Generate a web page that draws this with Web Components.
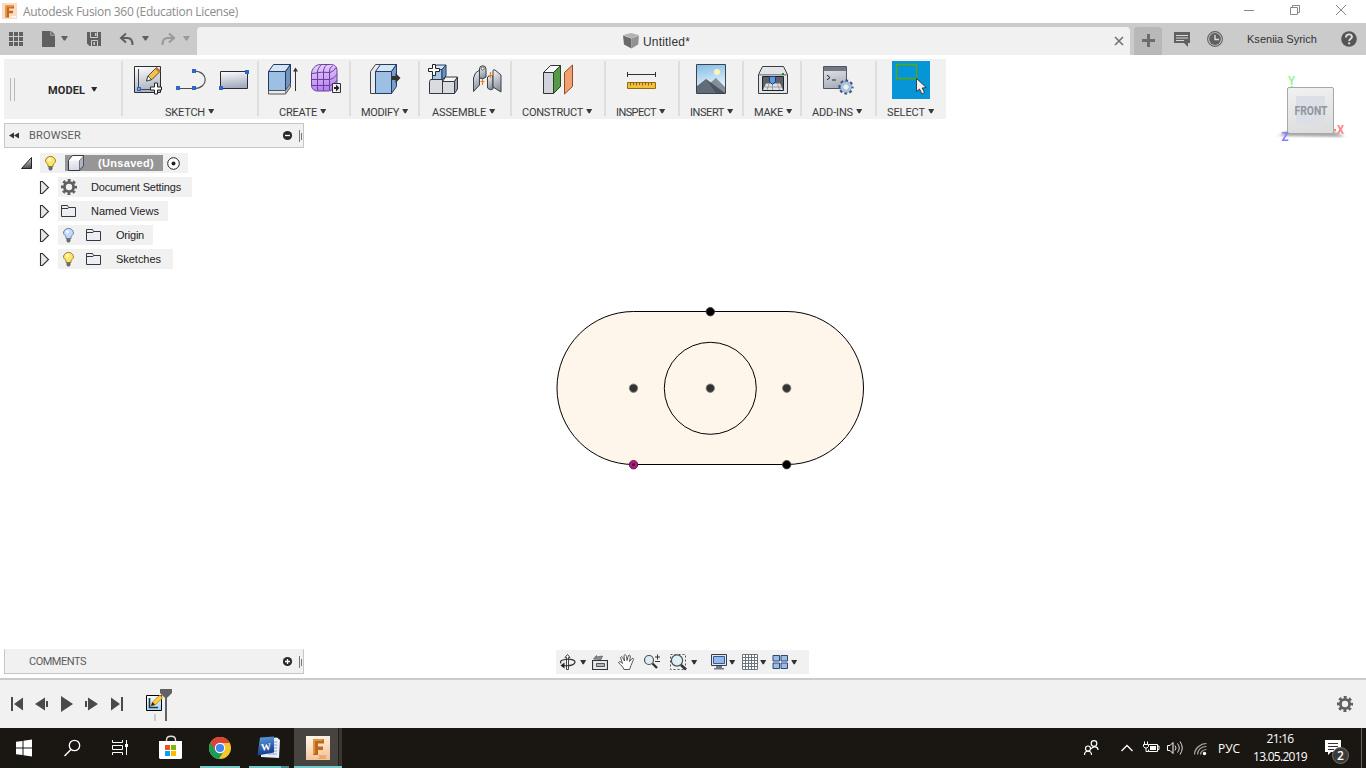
<!DOCTYPE html>
<html lang="en"><head><meta charset="utf-8"><title>Autodesk Fusion 360 (Education License)</title>
<style>html,body{margin:0;height:100%;overflow:hidden;background:#fff}</style></head>
<body><fusion-app></fusion-app>
<script>
// Icons share one artboard: each entry is [x, y, width, height, markup].
const gear = (x,y,r,c,hole='#f1f1f1') => `<circle cx="${x}" cy="${y}" r="${r*.84}" fill="none" stroke="${c}" stroke-width="${r*.34}" stroke-dasharray="${r*.36} ${r*.2998}" stroke-dashoffset="${r*.18}"/><circle cx="${x}" cy="${y}" r="${r*.76}" fill="${c}"/><circle cx="${x}" cy="${y}" r="${r*.4}" fill="${hole}"/>`;
const bulb = (x,y,a,b) => `<path d="M${x+3} ${y+10.500}v-2C${x+1} ${y+7} ${x+.5} ${y+5.500} ${x+.5} ${y+5}a5 4.600 0 0 1 10 0c0 .5-.5 2-2.500 3.500v2z" fill="${a}" stroke="${b}"/><circle cx="${x+4.500}" cy="${y+3.800}" r="1.700" fill="#fff" opacity=".8"/><path d="M${x+3.500} ${y+10.500}h4v2.500l-1 1.500h-2l-1-1.500z" fill="#6a6a6a"/>`;
const folder = (x,y) => `<path d="M${x+.5} ${y+11.500}v-11h6l1 2h7v9z" fill="#eceef2" stroke="#333a44"/><path d="M${x+1} ${y+3.500}h6l1-1" fill="none" stroke="#333a44"/>`;
const plus = (x,y) => `<path d="M${x-1.500} ${y-5.500}h3v4h4v3h-4v4h-3v-4h-4v-3h4z" fill="#fff" stroke="#222"/>`;
const sq = (x,y) => `<path d="M${x-2} ${y-2}h4v4h-4z" fill="#2f66c8"/>`;
const grad = (id,a,b) => `<linearGradient id="${id}" x1="0" y1="0" x2=".2" y2="1"><stop stop-color="${a}"/><stop offset="1" stop-color="${b}"/></linearGradient>`;
const pencil = (x,y) => `<path d="M${x} ${y}l1.500-5 8.500-8.500 4 3.500-8.500 8.500z" fill="#f2c24c" stroke="#4a3a22" stroke-width=".9"/><path d="M${x} ${y}l1.500-5 3.500 3.500z" fill="#fff" stroke="#333" stroke-width=".8"/><path d="M${x+10} ${y-13.500}l4 3.500-1.500 1.500-4-3.500z" fill="#c7772f"/>`;
const ICONS = {
 caret:[0,0,7,6,'<path d="M0 0h7L4.200 4.500H2.800Z" fill="currentColor"/>'],
 drop:[0,0,7,6,'<path d="M.2 0h6L3.800 4.200H2.600Z" fill="currentColor"/>'],
 logo:[2,3,16,17,'<path d="M2 3h15v16H2z" fill="#fbdcc2"/><path d="M5.500 17.500V5.500h8.500v3H9v2.200h4v2.600H9v4.200z" fill="#c5661c"/><path d="M5.500 5.500h8.500l-1.500 1.800H7v9l-1.500 1.200z" fill="#e5933f"/><path d="M11 16h5v1.500h-5z" fill="#fff"/>'],
 apps:[9,32,14,14,[0,5,10].map(i=>[0,5,10].map(j=>`<path d="M${9+i} ${32+j}h4v4h-4z" fill="#606060"/>`).join('')).join('')],
 file:[42,31,13,16,'<path d="M42 31h8.500v4.500h4.500V47H42z" fill="#606060"/><path d="M51.300 31l3.700 3.700h-3.700z" fill="#606060"/>'],
 save:[87,32,14,14,'<path d="M87 32h14v14H89.500L87 43.500z" fill="#606060"/><path d="M90.500 32v5.500h7V32" fill="none" stroke="#cbcbcb"/><path d="M95 33h1.500v3H95z" fill="#cbcbcb"/><path d="M91.500 46v-5.500h6V46" fill="none" stroke="#cbcbcb"/><path d="M93.500 42h1.500v3h-1.500z" fill="#cbcbcb"/>'],
 undo:[119,32,15,14,'<path d="M126 33.500l-5 4.500 5 4.500M121.500 38h6c4 0 5 3 5 7" fill="none" stroke="#606060" stroke-width="2"/>'],
 redo:[161,32,15,14,'<path d="M169 33.500l5 4.500-5 4.500M173.500 38h-6c-4 0-5 3-5 7" fill="none" stroke="#999" stroke-width="2"/>'],
 doc:[623,33,16,16,'<path d="M623 35l8-2 8 2-7 3.200z" fill="#b3b3b3"/><path d="M623 35.500l8.500 3V48.500l-7.500-4z" fill="#6b6b6b"/><path d="M631.500 38.500l7.500-3-.8 9-6.700 4z" fill="#929292"/>'],
 close:[1114,36,10,10,'<path d="M1115 37l8 8m0-8l-8 8" stroke="#727272" stroke-width="1.600"/>'],
 add:[1142,34,13,14,'<path d="M1148.500 34v13m-6.500-6.500h13" stroke="#6c6c6c" stroke-width="3"/>'],
 chat:[1174,31,16,16,'<path d="M1174 32h16v11h-2v4l-4-4h-10z" fill="#606060"/><path d="M1176 35.500h12M1176 38h12M1176 40.500h8" stroke="#d8d8d8"/>'],
 clock:[1207,31,16,16,'<circle cx="1215" cy="39" r="7.400" fill="#cbcbcb" stroke="#606060" stroke-width="1.100"/><circle cx="1215" cy="39" r="5.900" fill="#606060"/><path d="M1215 35v4.500h4" fill="none" stroke="#ddd" stroke-width="1.400"/>'],
 help:[1341,31,16,16,'<circle cx="1349" cy="39" r="7.800" fill="#555"/><path d="M1346 37.500c0-4 6-4 6-.7 0 2-2.800 2-2.800 4.200" fill="none" stroke="#ddd" stroke-width="1.900"/><path d="M1348.200 42.300h2v2h-2z" fill="#ddd"/>'],
 wmin:[1244,5,12,10,'<path d="M1245 10.500h10" stroke="#888"/>'],
 wmax:[1289,4,12,12,'<path d="M1290.500 7.500h7v7h-7zM1292.500 7V5.500h7v7H1298" fill="none" stroke="#888"/>'],
 wclose:[1335,4,12,12,'<path d="M1336 5l10 10m0-10l-10 10" stroke="#888"/>'],
 sketch:[129,61,38,38,grad('a','#fff','#abb3c0')+`<path d="M134.500 66.500h26v26h-26z" fill="url(#a)" stroke="#292c30"/><path d="M138.500 69v18M141 89.500h12" stroke="#445"/><path d="M137.500 87.500h3v3h-3z" fill="#6ab0ee" stroke="#205fae"/>${pencil(146.500,81)}${plus(156,88.500)}`],
 line:[172,61,38,38,`<path d="M178 88.500h16c15 0 15-17.500 0-17.500" fill="none" stroke="#4b4f54" stroke-width="1.200"/>${sq(178,88)}${sq(194,88)}${sq(194,71)}`],
 rect:[215,61,38,38,grad('a','#fff','#a3acbd')+`<path d="M220.500 71.500h27v17h-27z" fill="url(#a)" stroke="#292c30"/>${sq(247,72)}${sq(221,88)}`],
 extrude:[263,61,38,38,'<path d="M268.500 71.500l5-7h17l-5 7z" fill="#d5e5f4" stroke="#233b63"/><path d="M268.500 71.500h17v19h-17z" fill="#9cbfe3" stroke="#233b63"/><path d="M285.500 71.500l5-7v21l-5 8z" fill="#6e94bf" stroke="#233b63"/><path d="M268.500 90.500h17v3.500h-17z" fill="#e8ebf0" stroke="#555"/><path d="M285.500 90.500l5-7v3.500l-5 7" fill="#bbc1cb" stroke="#555"/><path d="M295.500 69v22" stroke="#333"/><path d="M293 71.500l2.500-4 2.500 4z" fill="#333"/>'],
 form:[306,61,38,38,grad('a','#ead6ff','#b783f0')+'<path d="M311.500 74c0-5 4-9.500 9-9.500h10c4 0 6.500 2 6.500 6v11c0 5-4 9.500-9 9.500h-10c-4 0-6.500-2-6.500-6z" fill="url(#a)" stroke="#6b3f9b"/><path d="M317.500 72c0-3 2-5 3.500-7M317.500 72v18M323.500 72c0-3 1-5 3-7M323.500 72v19M329.500 72c0-3 1-5 3-6M329.500 72v18M312 73.500q10-2 18-1 4-1 6-5M311 79.500h19q4-1 7-5M311 85.500h19q4-1 7-5" fill="none" stroke="#6b3f9b"/><path d="M332.500 83.500h8v9h-8z" fill="#eee" stroke="#333"/><path d="M334 87h2v-2.500l3.500 3.500-3.500 3.500V89H334z" fill="#222"/>'],
 modify:[366,61,38,38,'<path d="M370.500 71.500l5-7h10l-5 7v22h-10z" fill="#e9ebef" stroke="#444"/><path d="M375.500 71.500l5-7h16l-5 7z" fill="#d4e5f5" stroke="#233b63"/><path d="M375.500 71.500h16v22h-16z" fill="#9cbfe3" stroke="#233b63"/><path d="M391.500 71.500l5-7v22l-5 7z" fill="#789fca" stroke="#233b63"/><path d="M391.500 76h4v-3l5 5-5 5v-3h-4z" fill="#333"/>'],
 assemble:[424,61,38,38,'<path d="M432.500 69.500l4-4.500h9.500l-4 4.500z" fill="#d4e5f5" stroke="#233b63"/><path d="M432.500 69.500h9.500v10h-9.500z" fill="#a7c6e8" stroke="#233b63"/><path d="M442 69.500l4-4.500v11l-4 4z" fill="#6e94bf" stroke="#233b63"/><path d="M429.500 81.500l1-2h12v14h-13z" fill="#d8dbe0" stroke="#34383e"/><path d="M442.500 81.500l3-4.500h12l-3 4.500z" fill="#f5f5f5" stroke="#34383e"/><path d="M442.500 81.500h12v12h-12z" fill="#d8dbe0" stroke="#34383e"/><path d="M454.500 81.500l3-4.500v12l-3 4.500z" fill="#9ca2ac" stroke="#34383e"/>'+plus(434,70)],
 joint:[467,61,38,38,grad('a','#f7f8fa','#8c949f')+'<path d="M473.500 91.500V78q1-6 6-8v15z" fill="url(#a)" stroke="#3b4148"/><path d="M479.500 69a3.200 3.200 0 0 1 6.500 0v8q-3 3-6.500 1z" fill="url(#a)" stroke="#3b4148"/><circle cx="482.700" cy="68.500" r="1.500" fill="#fff" stroke="#444" stroke-width=".8"/><path d="M487.500 77q3-3 5.500-1v13q-3 2-5.500-1z" fill="url(#a)" stroke="#3b4148"/><path d="M493 76v-5q0-2 2-1l6 5v17l-8-5z" fill="url(#a)" stroke="#3b4148"/><path d="M482.500 79v6M490.500 72v6M488.500 75.500h4M480.500 81.500h4" stroke="#ef7d1a" stroke-width="1.200"/>'],
 construct:[539,61,38,38,'<path d="M543.500 72.500l7-7h10l-7 7z" fill="#fafafa" stroke="#333"/><path d="M543.500 72.500h10v21h-10z" fill="#d0d3dc" stroke="#333"/><path d="M553.500 72.500l7-7v21l-7 7z" fill="#569a48" stroke="#24451e"/><path d="M564.500 72.500l8-7.500v21.500l-8 7.500z" fill="#f0a071" stroke="#964b24"/>'],
 inspect:[622,61,38,38,'<path d="M627.500 72v5m28-5v5m-28-2.500h28" stroke="#333" fill="none"/><path d="M627.500 82.500h28v6h-28z" fill="#f0bf3c" stroke="#966914"/><path d="M630.500 83v2.500m3-2.500v2m3-2v2.500m3-2.500v2m3-2v2.500m3-2.500v2m3-2v2.500m3-2.500v2" stroke="#8a6015"/>'],
 insert:[692,61,38,38,grad('a','#82bce6','#f4fafb')+'<path d="M696.500 64.500h29v29h-29z" fill="url(#a)" stroke="#39434f"/><path d="M697 89l9-9 4 3 6-5 9 9v6h-28z" fill="#858e9a"/><path d="M697 86l9-7 14 14h-23z" fill="#626c79"/><path d="M706 79l19 14h-9z" fill="#4b5461"/><circle cx="717" cy="72" r="3" fill="#fff4b8"/>'],
 make:[754,61,38,38,'<path d="M758.500 74.500l4-8h21l4 8v19h-29z" fill="#e2e4e7" stroke="#3a3d42"/><path d="M759 74h28v1.500h-28z" fill="#8b8f96"/><path d="M762.500 76.500h21v14h-21z" fill="#5b6068" stroke="#222"/><path d="M766 83.500h14l3 6.500h-20z" fill="#dfe2e6"/><path d="M765 87h17m-13-3l-2 6m5.500-6v6m5-6l2 6" fill="none" stroke="#8b8f96" stroke-width=".8"/><path d="M769.500 76.500h6v5l-3 3-3-3z" fill="#5c9be0" stroke="#203b68"/><path d="M782 73h2v2h-2z" fill="#15912a"/>'],
 addins:[820,61,38,38,grad('a','#e8eaed','#abb1bb')+'<path d="M824.500 66.500h23v22h-23z" fill="url(#a)" stroke="#50565e"/><path d="M825 67h22v4h-22z" fill="#707984"/><path d="M828 75l3 2.500-3 2.500m5 0h4" fill="none" stroke="#20242a"/>'+gear(847,87,7.500,'#3d5879','#eee')+'<circle cx="847" cy="87" r="4.200" fill="none" stroke="#a9c5e5" stroke-width="2.600"/>'],
 select:[892,61,38,38,'<path d="M892 61h38v38h-38z" fill="#0696d7"/><path d="M896.500 64.500h20v14h-20z" fill="none" stroke="#5aa800" stroke-width="1.300"/><path d="M916.500 78.500v13l3-2.500 2.500 5 2.500-1.300-2.300-4.700 4-.5z" fill="#f1f1f1" stroke="#222" stroke-width=".8"/>'],
 rewind:[9,132,11,7,'<path d="M14 132.500v6l-5-3zM19 132.500v6l-5-3z" fill="#333"/>'],
 minus:[283,130,10,11,'<circle cx="287.500" cy="135.500" r="4.600" fill="#2b2b2b"/><path d="M285 135.500h5" stroke="#fff" stroke-width="1.300"/>'],
 plusc:[283,130,10,11,'<circle cx="287.500" cy="135.500" r="4.600" fill="#2b2b2b"/><path d="M285 135.500h5m-2.500-2.500v5" stroke="#fff" stroke-width="1.300"/>'],
 grip:[299,129,3,13,'<path d="M299.500 130v12m2-9v7" stroke="#777"/>'],
 open:[20,156,13,14,grad('a','#eee','#555')+'<path d="M21.500 168.500l10-11v11z" fill="url(#a)" stroke="#222"/>'],
 shut:[39,180,11,14,'<path d="M40.500 181.500h2l6 6-6 6h-2z" fill="#e6e6e6" stroke="#333" stroke-width="1.100"/>'],
 bulbY:[45,155,12,16,bulb(45,156,'#ffe765','#a08022')],
 bulbB:[45,155,12,16,bulb(45,156,'#c3d9ff','#6480ad')],
 body:[68,155,16,16,grad('a','#fff','#d7dae1')+'<path d="M68.500 160.500l4-5h11v10l-4 5h-11z" fill="url(#a)" stroke="#303841"/><path d="M79.500 160.500l4-5v10l-4 5z" fill="#afb5bf" stroke="#303841" stroke-width=".6"/><path d="M69 160.500l4-4.500h10l-4 4.500z" fill="#fff"/>'],
 target:[167,156,13,14,'<circle cx="173.500" cy="163.500" r="5.800" fill="#fff" stroke="#222"/><circle cx="173.500" cy="163.500" r="2" fill="#222"/>'],
 gear:[61,179,16,16,gear(69,187,8,'#606060')],
 folder:[61,204,16,14,folder(61,205)],
 orbit:[559,653,17,18,'<path d="M566.500 669.500v-12h-1.500l2.500-3 2.500 3h-1.500v12z" fill="#fff" stroke="#333" stroke-width=".9"/><path d="M563 665.500c9 1 12-1.500 12-3.500s-5-3.500-10-2.500-5 2-4 4" fill="none" stroke="#333" stroke-width="1.200"/><path d="M560.500 665.500l4-3v6z" fill="#222"/>'],
 look:[592,654,16,16,'<path d="M592.500 660.500h15v9h-15z" fill="#e5e7eb" stroke="#333" stroke-width="1.200"/><path d="M596.500 663.500h8v3h-8z" fill="#aeb4be" stroke="#555"/><path d="M593.500 659l3-3.500v1.500l6-1-1.500 3.500z" fill="#8b9099" stroke="#555" stroke-width=".7"/>'],
 hand:[618,654,17,16,'<path d="M624 669.500c-1-3-3-4-5.500-7 1-2 3 0 4 1l-2-6c1-1.500 2-.5 2.500.5l1.500 3-.5-5.500c1-1.500 2-.5 2.500 1l.5 4 1.500-5c1-1 2 0 1.800 1.500l-.8 4.500 2.500-3c1.500-.5 2 .5 1 2l-2 5-1.500 4z" fill="#fff" stroke="#444" stroke-width=".9"/>'],
 zoom:[643,654,18,16,'<circle cx="649" cy="660" r="4.500" fill="#dcecf2" stroke="#4b5058" stroke-width="1.200"/><path d="M652.500 663.500l4.500 4.500" stroke="#333" stroke-width="2.400"/><path d="M657.500 654.500v5m-2.500-2.500h5m-5 4.500h5" stroke="#333"/>'],
 zoomwin:[669,653,18,18,'<path d="M670.500 654.500h15v15h-15z" fill="none" stroke="#555" stroke-dasharray="2 2"/><circle cx="677" cy="660.500" r="5.600" fill="#dff0f4" stroke="#4b5058" stroke-width="1.200"/><path d="M681 665l5 4.500" stroke="#333" stroke-width="2.600"/>'],
 display:[711,653,17,18,'<path d="M711.500 654.500h15v11h-15z" fill="#e3e6ea" stroke="#333f50"/><path d="M713.500 656.500h11v7h-11z" fill="#94baed" stroke="#345b94"/><path d="M716 666h6v2h2v1.500h-10V668h2z" fill="#737a84"/>'],
 grid:[742,654,16,16,'<path d="M742.500 654.500h15v15h-15zM745.500 654v15m3-15v15m3-15v15m3-15v15M742 657.500h15m-15 3h15m-15 3h15m-15 3h15" fill="#fff" stroke="#6b737e"/>'],
 views:[772,654,17,16,'<path d="M773 655.500h6.500v5.500h-6.500zm8 0h6.500v5.500h-6.500zm-8 7.500h6.500v5.500h-6.500zm8 0h6.500v5.500h-6.500z" fill="#9cbce7" stroke="#2b4975"/>'],
 first:[11,697,12,14,'<path d="M11 697h2v14h-2zM23 697.500v13l-9-6.500z" fill="#4a4a4a"/>'],
 prev:[35,697,13,14,'<path d="M45 697.500v13l-10-6.500zM46 701h2v6h-2z" fill="#4a4a4a"/>'],
 play:[61,696,12,16,'<path d="M61 696v16l12-8z" fill="#4a4a4a"/>'],
 next:[85,697,13,14,'<path d="M88 697.500v13l10-6.500zM85 701h2v6h-2z" fill="#4a4a4a"/>'],
 last:[111,697,12,14,'<path d="M121 697h2v14h-2zM111 697.500v13l9-6.500z" fill="#4a4a4a"/>'],
 marker:[145,688,28,34,grad('a','#fff','#a9d5f4')+'<path d="M146.500 695.500h15v15h-15z" fill="url(#a)" stroke="#000"/><path d="M149.500 698v9.500h8.500" fill="none" stroke="#243349" stroke-width="1.600"/><path d="M151 706l1.500-4 7.500-7 2.500 3-7.500 7z" fill="#ffce36" stroke="#bd8118" stroke-width=".8"/><path d="M151 706l1.500-4 2.500 2.500z" fill="#222"/><path d="M154 714h2v7h-2z" fill="#ccc"/><path d="M160 689h12v4l-4.500 4.500h-3L160 693z" fill="#626262"/><path d="M165 695h2v26h-2z" fill="#626262"/>'],
 win:[0,728,48,40,'<path d="M16 741.800l6.500-.9v6.600H16zM23.500 740.700l8.500-1.200v8h-8.500zM16 748.500h6.500v6.600l-6.500-.9zM23.500 748.500H32v8l-8.500-1.200z" fill="#fff"/>'],
 search:[48,728,48,40,'<circle cx="74.500" cy="745.500" r="5.200" fill="none" stroke="#fff" stroke-width="1.300"/><path d="M71 749.500l-6.500 6.500" stroke="#fff" stroke-width="1.500"/>'],
 tasks:[96,728,50,40,'<path d="M112.500 740v2.500h10v-2.500m-10 15v-2.500h10v2.500M112.500 745.500h10v4h-10z" fill="none" stroke="#fff"/><path d="M126.500 740v15" stroke="#fff"/><path d="M125 744h3v3h-3z" fill="#fff"/>'],
 store:[146,728,49,40,'<path d="M166.500 742v-2c0-5 9-5 9 0v2" stroke="#ddd" fill="none" stroke-width="1.400"/><path d="M159 741h23v17l-1 1h-21l-1-1z" fill="#fff"/><path d="M165 745h5v5h-5z" fill="#f25022"/><path d="M171 745h5v5h-5z" fill="#7fba00"/><path d="M165 751h5v5h-5z" fill="#00a4ef"/><path d="M171 751h5v5h-5z" fill="#ffb900"/>'],
 chrome:[200,728,40,40,'<circle cx="220" cy="748" r="11" fill="#f5c72d"/><path d="M210.500 742.500A11 11 0 0 0 219 759l5.500-9-4.500-2z" fill="#199e58"/><path d="M210.500 742.500L216 752l4-9h9.800a11 11 0 0 0-19.300-.5z" fill="#da4437"/><circle cx="220" cy="748" r="5.200" fill="#fff"/><circle cx="220" cy="748" r="4.100" fill="#4285f4"/><path d="M200 766h40v2h-40z" fill="#76c9ca"/>'],
 word:[249,728,40,40,grad('a','#5ea2e0','#153c8c')+'<path d="M261 739l16-1.500 3 2.500-1 18-18-1z" fill="#e9eef7"/><path d="M268 742h9m-9 3h9m-9 3h9m-9 3h9m-9 3h9" stroke="#8ba4cf"/><path d="M260 737.500l14-1v16l-16.500 3z" fill="url(#a)"/><text x="261" y="750.500" font-size="10" font-weight="700" fill="#fff" transform="rotate(-5 265 747)" font-family="Liberation Serif">W</text><path d="M249 766h32v2h-32z" fill="#76c9ca"/><path d="M281 766h8v2h-8z" fill="#50898c"/>'],
 fusion:[294,728,48,40,grad('a','#fff7ef','#f5c59b')+'<path d="M294 728h45v40h-45z" fill="#47443f"/><path d="M339 728h3v40h-3z" fill="#393630"/><path d="M338.500 728v38" stroke="#24211b"/><path d="M306 736h24v24h-24z" fill="url(#a)"/><path d="M313 755v-16h11v4.500h-6v3h5v3.500h-5v5z" fill="#bd671c"/><path d="M313 755v-16h11l-2 2h-7v12z" fill="#dd963e"/><text x="318.500" y="758.500" font-family="Liberation Sans" font-size="4.500" font-weight="700" fill="#e6913f">360</text><path d="M294 766h48v2h-48z" fill="#76c9ca"/>'],
 people:[1083,740,17,16,'<path d="M1084.500 755c0-5 7-5 7 0M1091 749c2-3 7-3 7 1" fill="none" stroke="#fff" stroke-width="1.200"/><circle cx="1088" cy="748.500" r="2.500" fill="none" stroke="#fff" stroke-width="1.200"/><circle cx="1094" cy="743.500" r="2.800" fill="none" stroke="#fff" stroke-width="1.200"/>'],
 up:[1120,743,14,10,'<path d="M1121.500 751l5.500-5.500 5.500 5.500" fill="none" stroke="#fff" stroke-width="1.300"/>'],
 battery:[1143,741,17,14,'<path d="M1149 744.500h8.500v7h-9v-2m9-3.500h1.500v3.500h-1.500" fill="none" stroke="#fff"/><path d="M1150 746h6v4h-6z" fill="#fff"/><path d="M1144.500 741.500v3m3-3v3m-4 0h5v2l-1.500 1.500h-2l-1.500-1.500zM1146 748v3.500h2.500" fill="none" stroke="#fff"/>'],
 sound:[1167,741,17,14,'<path d="M1167.500 745.500h2.500l3-3v11l-3-3h-2.500z" fill="none" stroke="#fff"/><path d="M1175 745.500q2 2.500 0 5m2.500-7q3.500 4.500 0 9m2.500-11q4.500 6.500 0 13" fill="none" stroke="#ddd"/>'],
 wifi:[1193,742,15,14,'<path d="M1194.500 754.500c0-6 6-11 12-11M1197.500 754.500c0-5 4-8 9-8M1200.500 754.500c0-3 3-5 6-5" fill="none" stroke="#aaa" stroke-width="1.200"/><circle cx="1204.500" cy="753.500" r="1.700" fill="#fff"/>'],
 notify:[1324,738,26,28,'<path d="M1325 740h16v12h-10l-3 3v-3h-3z" fill="#fff"/><path d="M1328 743.500h10m-10 3h10m-10 3h6" stroke="#333"/><circle cx="1340.500" cy="755.500" r="8" fill="#3c3b39" stroke="#77736e"/><text x="1340.500" y="759.800" font-family="Open Sans" font-size="12" font-weight="600" fill="#fff" text-anchor="middle">2</text>']
};
const define = (name, css, html, after) => customElements.define(name, class extends HTMLElement {
  connectedCallback(){
    if(this.shadowRoot) return;
    this.attachShadow({mode:'open'}).innerHTML = `<style>:host{display:block;box-sizing:border-box}*{box-sizing:border-box}${css}</style>` + (typeof html==='function'?html(this):html);
    if(after) after(this);
  }
});
const icon = (n,l=0,extra='') => `<ui-icon name="${n}" style="margin-left:${l}px;${extra}"></ui-icon>`;
define('ui-icon',':host{flex:none;line-height:0}svg{display:block}',e=>{
  const [x,y,w,h,m]=ICONS[e.getAttribute('name')];
  return `<svg width="${w}" height="${h}" viewBox="${x} ${y} ${w} ${h}">${m}</svg>`;
});
// A label that tracks its letters to a given width.
define('ui-text',':host{flex:none;white-space:nowrap}span{display:inline-block}','<span><slot></slot></span>',e=>{
  const w=+e.getAttribute('width'), s=e.shadowRoot.querySelector('span');
  if(w) s.style.letterSpacing=((w-s.getBoundingClientRect().width)/e.textContent.length).toFixed(3)+'px';
});
define('title-bar',':host{display:flex;align-items:center;padding-left:2px;font:12px "Open Sans",sans-serif;color:#8c8c8c;background:#fff}.c{margin-left:auto;display:flex;align-items:center;padding:0 19px 3px 0;gap:34px}',
 `${icon('logo')}<ui-text width="215" style="margin-left:5px">Autodesk Fusion 360 (Education License)</ui-text><div class="c">${icon('wmin')}${icon('wmax')}${icon('wclose')}</div>`);
define('tab-bar',`:host{display:flex;background:#cbcbcb;font:11px "Liberation Sans",sans-serif;color:#333}
 .q{width:197px;display:flex;align-items:center;color:#606060}.t{width:933px;margin-top:4px;background:#f1f1f1;border-radius:4px 4px 0 0;display:flex;align-items:center;font-size:12px;padding-left:426px}
 .n{width:28px;margin:4px 0 0 4px;background:#b8b8b8;border-radius:3px 3px 0 0;display:grid;place-items:center}.u{flex:1;display:flex;align-items:center}`,
 `<div class="q">${icon('apps',9)}${icon('file',19)}${icon('caret',6)}${icon('save',19)}${icon('undo',18)}${icon('caret',8)}${icon('redo',12)}${icon('caret',7,'color:#999')}</div>
 <div class="t">${icon('doc')}<ui-text width="47" style="margin:2px 0 0 4px">Untitled*</ui-text>${icon('close',424)}</div><div class="n">${icon('add')}</div>
 <div class="u">${icon('chat',12)}${icon('clock',17)}<ui-text width="70" style="margin-left:24px">Kseniia Syrich</ui-text>${icon('help',24)}</div>`);
define('ribbon-group',':host{position:relative;flex:none;padding-top:2px}:host::before{content:"";position:absolute;left:0;top:2px;bottom:3px;width:2px;background:#dedede}.i{display:flex;gap:5px;height:38px}.l{display:flex;align-items:center;height:18px;margin-top:4px;font:11px Roboto,"Liberation Sans",sans-serif;color:#3a3a3a}',
 e=>{const a=n=>e.getAttribute(n);e.style.width=a('w')+'px';return `<div class="i" style="padding-left:${+a('ip')+2}px">${a('icons').split(' ').map(n=>icon(n)).join('')}</div><div class="l" style="padding-left:${+a('lp')+2}px"><ui-text width="${a('tw')}">${a('label')}</ui-text>${icon('drop',3)}</div>`});
const groups=[['SKETCH',136,6,42,40,'sketch line rect'],['CREATE',92,4,20,38,'extrude form'],['MODIFY',69,15,10,38,'modify'],['ASSEMBLE',92,4,12,54,'assemble joint'],['CONSTRUCT',94,27,10,61,'construct'],['INSPECT',74,16,10,40,'inspect'],['INSERT',64,12,10,34,'insert'],['MAKE',58,10,10,29,'make'],['ADD-INS',75,17,10,41,'addins'],['SELECT',71,15,10,38,'select']];
define('tool-ribbon',':host{display:flex;width:942px;height:60px;background:#f1f1f1}.m{width:117px;display:flex;align-items:center;font:bold 11px Roboto,sans-serif;color:#2a2a2a}.g{width:5px;height:23px;border:solid #b9b9b9;border-width:0 1px;margin-left:6px}.m ui-text{margin:2px 0 0 33px}',
 `<div class="m"><div class="g"></div><ui-text width="37">MODEL</ui-text>${icon('drop',6,'margin-top:2px')}</div>`+groups.map(([l,w,ip,lp,tw,ic],i)=>`<ribbon-group label="${l}" w="${i==7?w:i==8?w-0:w}" ip="${i==8?ip+0:ip}" lp="${lp}" tw="${tw}" icons="${ic}"></ribbon-group>`).join(''));
define('panel-bar',':host{display:flex;align-items:center;width:300px;height:25px;background:#f1f1f1;border:1px solid #c6c6c6;font:11px Roboto,sans-serif;color:#5c5c5c}.a{width:24px;padding-left:4px}.e{margin-left:auto;display:flex;align-items:center;gap:6px;padding-right:1px}',
 e=>`<div class="a">${e.hasAttribute('collapse')?icon('rewind'):''}</div><ui-text width="${e.getAttribute('tw')}">${e.getAttribute('label')}</ui-text><div class="e">${icon(e.getAttribute('action'))}${icon('grip')}</div>`);
define('tree-row',':host{display:flex;height:20px;align-items:center;font:11px "Liberation Sans",sans-serif;color:#222}.b{height:20px;background:#f1f1f1;display:flex;align-items:center}',
 e=>{const a=n=>e.getAttribute(n);return `${icon('shut',39)}<div class="b" style="margin-left:8px;width:${a('w')}px">${a('bulb')?icon(a('bulb'),5)+icon('folder',11,'margin-right:14px'):icon(a('icon'),3,'margin-right:14px')}<ui-text width="${a('tw')}">${a('label')}</ui-text></div>`});
define('browser-tree',':host{display:flex;flex-direction:column;gap:4px}.r{display:flex;height:20px;align-items:center;font:bold 11px "Liberation Sans",sans-serif;color:#fff}.b{height:20px;width:148px;margin-left:7px;background:#f1f1f1;display:flex;align-items:center}.s{width:98px;height:16px;margin-left:8px;background:#969696;display:flex;align-items:center}',
 `<div class="r">${icon('open',20)}<div class="b">${icon('bulbY',5)}<div class="s">${icon('body',3)}<ui-text width="56" style="margin-left:14px">(Unsaved)</ui-text></div>${icon('target',4)}</div></div>
 <tree-row w="134" icon="gear" tw="90" label="Document Settings"></tree-row><tree-row w="110" icon="folder" tw="68" label="Named Views"></tree-row><tree-row w="95" bulb="bulbB" tw="28" label="Origin"></tree-row><tree-row w="115" bulb="bulbY" tw="45" label="Sketches"></tree-row>`);
const navDrop = l => icon('drop',l,'margin-top:2px');
define('nav-bar',':host{display:flex;align-items:center;width:253px;height:24px;background:#f1f1f1;color:#333}',
 icon('orbit',3)+navDrop(4)+icon('look',5)+icon('hand',10)+icon('zoom',8)+icon('zoomwin',8)+navDrop(4)+icon('display',13)+navDrop(1)+icon('grid',6)+navDrop(2)+icon('views',5)+navDrop(2));
const dot=(x,y,f='#333',s='#8a8784')=>`<circle cx="${x}" cy="${y}" r="4.200" fill="${f}" stroke="${s}" stroke-width=".9"/>`;
define('sketch-canvas',':host{position:absolute;left:550px;top:245px}svg{display:block}',
 `<svg width="320" height="180" viewBox="550 300 320 180"><path d="M633.500 311.500H787a76.500 76.500 0 0 1 0 153H633.500a76.500 76.500 0 0 1 0-153z" fill="#fff6eb" stroke="#000"/><circle cx="710.300" cy="388.300" r="46" fill="none" stroke="#000"/>${dot(633.500,388.200)}${dot(710.300,388.200)}${dot(786.700,388.200)}${dot(710.300,311.700,'#000','#444')}${dot(786.700,464.700,'#000','#444')}${dot(633.500,464.700,'#b21b82','#51113e')}<circle cx="633.500" cy="464.700" r="1.400" fill="#3b0b2b"/></svg>`);
define('view-cube',':host{position:absolute;left:1275px;top:15px}svg{display:block;font:bold 12px Roboto,sans-serif}',
 `<svg width="75" height="75" viewBox="1275 70 75 75"><defs><filter id="f"><feGaussianBlur stdDeviation="2 1"/></filter>${grad('g','#f2f2f2','#dedede')}</defs><path d="M1279 136l8-5h47l10 6z" fill="#aaa" filter="url(#f)"/><rect x="1287.500" y="87.500" width="46" height="46" rx="1.500" fill="url(#g)" stroke="#a7a7a7"/><path d="M1296 96h29v29h-29z" fill="#dcdfe5"/><text x="1294.500" y="115" font-size="12" textLength="33" lengthAdjust="spacingAndGlyphs" fill="#91959b">FRONT</text><text x="1288" y="85" fill="#98f598" font-size="12" textLength="7" lengthAdjust="spacingAndGlyphs">Y</text><path d="M1291 86h2v1h-2z" fill="#98f598"/><text x="1337" y="133.500" fill="#ff8080" textLength="7" lengthAdjust="spacingAndGlyphs">X</text><path d="M1334 129h2v2h-2z" fill="#ff8080"/><text x="1281.500" y="140.500" fill="#8080ff" textLength="7" lengthAdjust="spacingAndGlyphs">Z</text></svg>`);
define('work-space',':host{position:relative;display:flex;flex-direction:column;padding:4px 0 4px 4px;background:#fff}.p{margin-top:4px}browser-tree{margin:5px 0 0 -4px}.f{margin-top:auto;display:flex;align-items:flex-end;gap:252px}.f panel-bar{border-top-color:#f1f1f1}',
 `<tool-ribbon></tool-ribbon><panel-bar class="p" collapse label="BROWSER" tw="52" action="minus"></panel-bar><browser-tree></browser-tree><sketch-canvas></sketch-canvas><view-cube></view-cube><div class="f"><panel-bar label="COMMENTS" tw="57" action="plusc"></panel-bar><nav-bar></nav-bar></div>`);
define('time-line',':host{display:flex;align-items:center;border-top:2px solid #cbcbcb;background:#f1f1f1;padding-right:13px}',
 icon('first',11)+icon('prev',12)+icon('play',13)+icon('next',12)+icon('last',13)+icon('marker',22,'margin-top:2px')+icon('gear',0,'margin-left:auto'));
define('task-bar',':host{display:flex;background:#1a1611;color:#fff;font:12px "Open Sans","Noto Sans",sans-serif}.t{margin-left:auto;display:flex;align-items:center}.d{width:54px;margin-left:13px;display:flex;flex-direction:column;align-items:center;line-height:18px}.e{width:5px;height:40px;margin-left:11px;border-left:1px solid #66625d}',
 icon('win')+icon('search')+icon('tasks')+icon('store')+icon('chrome',5)+icon('word',9)+icon('fusion',5)+`<div class="t">${icon('people')}${icon('up',20)}${icon('battery',9)}${icon('sound',7)}${icon('wifi',9,'margin-top:2px')}<ui-text width="22" style="margin-left:10px">РУС</ui-text><div class="d"><ui-text width="27">21:16</ui-text><ui-text width="54">13.05.2019</ui-text></div>${icon('notify',17,'margin-top:8px')}<div class="e"></div></div>`);
define('fusion-app',':host{display:grid;width:1366px;height:768px;grid-template-rows:23px 32px 623px 50px 40px}','<title-bar></title-bar><tab-bar></tab-bar><work-space></work-space><time-line></time-line><task-bar></task-bar>');
</script></body></html>
